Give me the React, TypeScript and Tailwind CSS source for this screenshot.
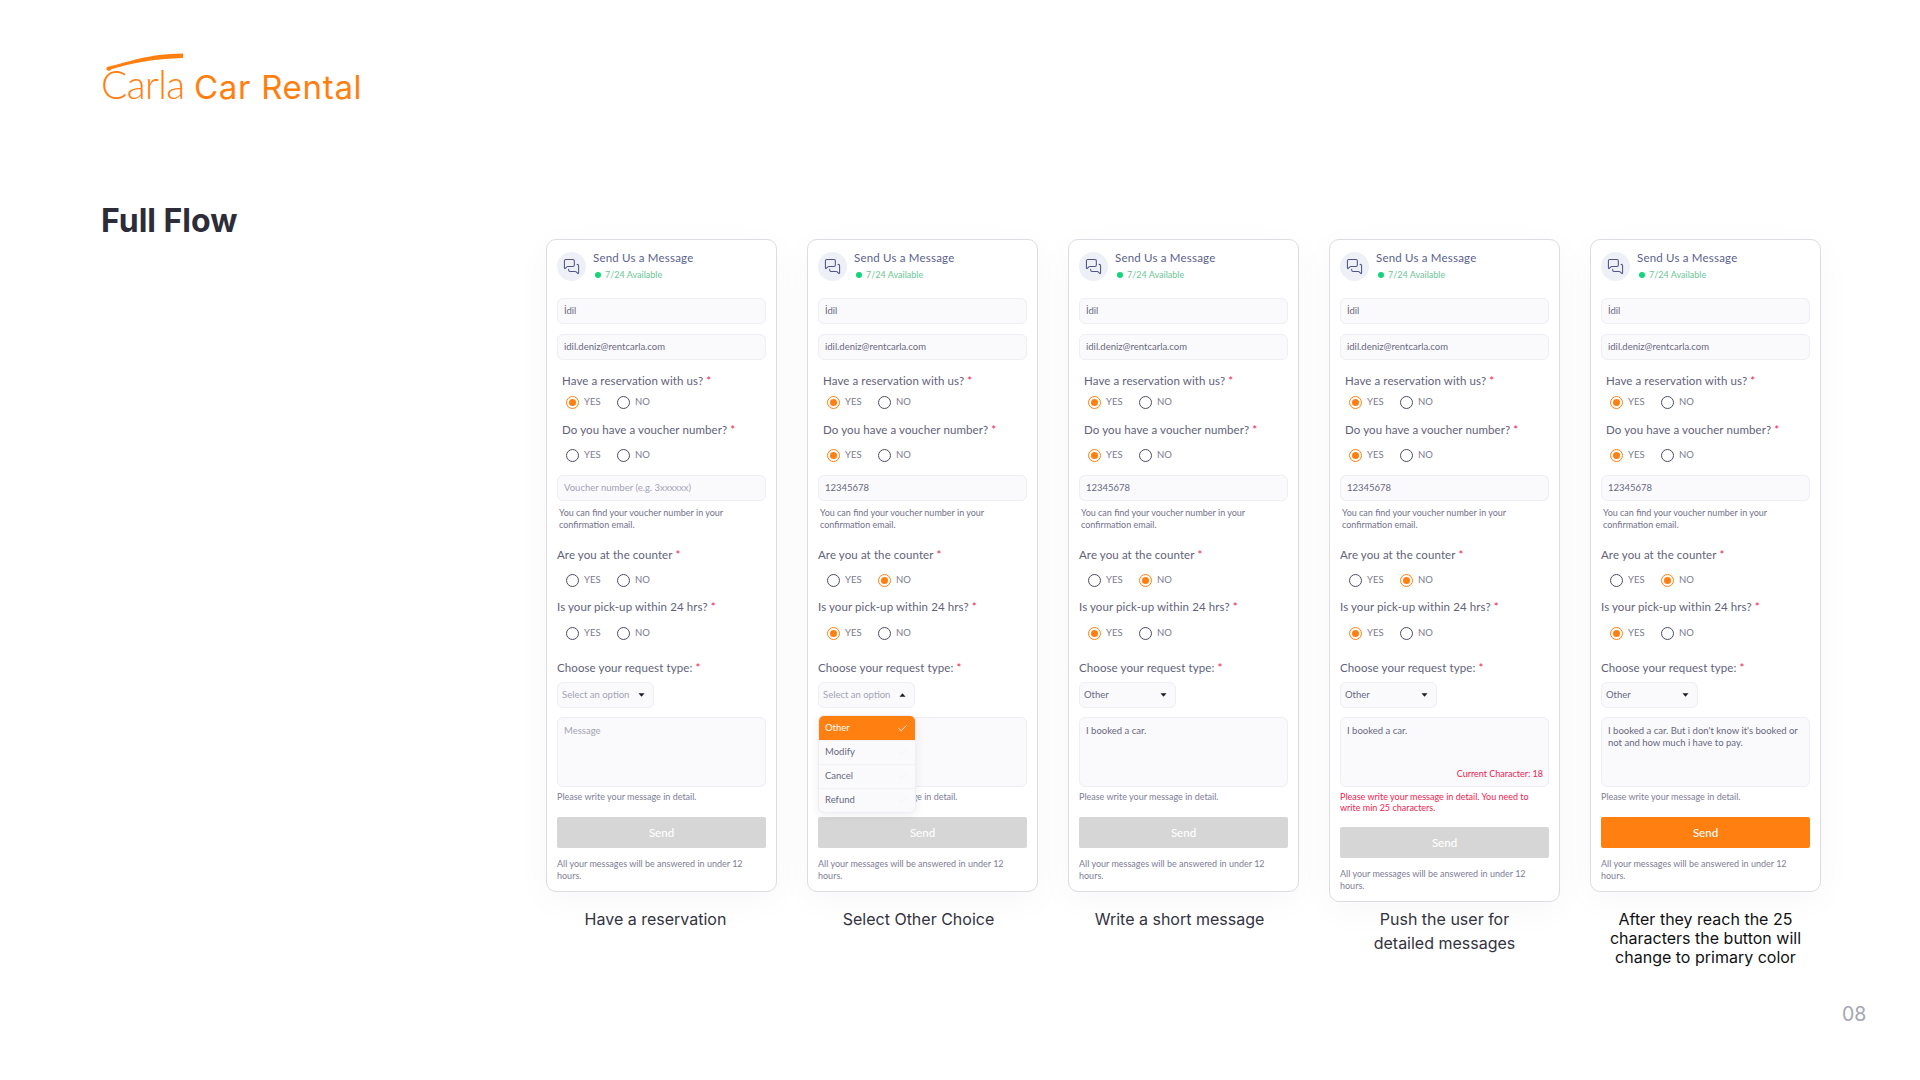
import React from 'react';
import { MessagesSquare, Check } from 'lucide-react';

type Choice = 'yes' | 'no' | null;

interface CardConfig {
  caption: string[];
  captionClass: string;
  voucher: Choice;
  voucherValue: string;
  counter: Choice;
  pickup: Choice;
  selectValue: string;
  menuOpen?: boolean;
  message: string;
  charCount?: string;
  error?: boolean;
  ready?: boolean;
}

const BODY = "[font-family:Lato,'Noto_Sans',sans-serif]";

const cards: CardConfig[] = [
  {
    caption: ['Have a reservation'],
    captionClass: 'mt-[15px] -translate-x-[6px] leading-[24px] text-[#33333f]',
    voucher: null,
    voucherValue: '',
    counter: null,
    pickup: null,
    selectValue: '',
    message: '',
  },
  {
    caption: ['Select Other Choice'],
    captionClass: 'mt-[15px] -translate-x-[4px] leading-[24px] text-[#33333f]',
    voucher: 'yes',
    voucherValue: '12345678',
    counter: 'no',
    pickup: 'yes',
    selectValue: '',
    menuOpen: true,
    message: '',
  },
  {
    caption: ['Write a short message'],
    captionClass: 'mt-[15px] -translate-x-[4px] leading-[24px] text-[#33333f]',
    voucher: 'yes',
    voucherValue: '12345678',
    counter: 'no',
    pickup: 'yes',
    selectValue: 'Other',
    message: 'I booked a car.',
  },
  {
    caption: ['Push the user for', 'detailed messages'],
    captionClass: 'mt-[5px] leading-[24px] text-[#33333f]',
    voucher: 'yes',
    voucherValue: '12345678',
    counter: 'no',
    pickup: 'yes',
    selectValue: 'Other',
    message: 'I booked a car.',
    charCount: 'Current Character: 18',
    error: true,
  },
  {
    caption: ['After they reach the 25', 'characters the button will', 'change to primary color'],
    captionClass: 'mt-[18px] leading-[19px] text-[#111111]',
    voucher: 'yes',
    voucherValue: '12345678',
    counter: 'no',
    pickup: 'yes',
    selectValue: 'Other',
    message: "I booked a car. But i don't know it's booked or not and how much i have to pay.",
    ready: true,
  },
];

const Radio = ({ checked, label }: { checked: boolean; label: string }) => (
  <div className="flex items-center">
    <span
      className={`flex h-[13px] w-[13px] items-center justify-center rounded-full border-[1.5px] ${
        checked ? 'border-[#ff7f11]' : 'border-[#4c4c64]'
      }`}
    >
      {checked && <span className="h-[7px] w-[7px] rounded-full bg-[#ff7f11]" />}
    </span>
    <span className="ml-[5px] text-[9.5px] text-[#7a7a8e]">{label}</span>
  </div>
);

const RadioRow = ({ value, className }: { value: Choice; className: string }) => (
  <div className={`flex h-[14px] pl-[9px] ${className}`}>
    <div className="w-[51px]">
      <Radio checked={value === 'yes'} label="YES" />
    </div>
    <Radio checked={value === 'no'} label="NO" />
  </div>
);

const Label = ({ text, className }: { text: string; className: string }) => (
  <div className={`h-[16px] text-[11.5px] leading-[16px] tracking-[0.1px] text-[#62627a] ${className}`}>
    {text} <span className="text-[#f0234f]">*</span>
  </div>
);

const TextInput = ({ value, placeholder, className = '' }: { value: string; placeholder?: string; className?: string }) => (
  <div
    className={`flex h-[26px] items-center rounded-[6px] border border-[#eeeef4] bg-[#fafafd] px-[6px] text-[9.5px] ${
      value ? 'text-[#686880]' : 'text-[#a3a3b4]'
    } ${className}`}
  >
    {value || placeholder}
  </div>
);

const Caret = ({ up }: { up?: boolean }) => (
  <svg width="7" height="4" viewBox="0 0 7 4" className={up ? 'rotate-180' : ''}>
    <path d="M0.5 0.3h6L3.5 3.8z" fill="#1c1c28" />
  </svg>
);

const DropdownMenu = () => (
  <div className="absolute left-0 top-[33px] z-10 w-[98px] overflow-hidden rounded-[6px] border border-[#eeeef4] bg-[#fafafd] text-[9.5px] text-[#686880] shadow-[0_2px_8px_rgba(40,40,70,0.08)]">
    {['Other', 'Modify', 'Cancel', 'Refund'].map((option, i) => (
      <div
        key={option}
        className={`flex h-[24px] items-center justify-between pl-[6px] pr-[7px] ${
          i === 0 ? 'bg-[#ff7f11] text-white' : 'border-t border-[#f1f1f6]'
        }`}
      >
        <span>{option}</span>
        <Check size={11} strokeWidth={2} className={i === 0 ? 'text-white' : 'text-[#f3f3f8]'} />
      </div>
    ))}
  </div>
);

const FormCard = ({ card }: { card: CardConfig }) => (
  <div className="w-[231px]">
    <div
      className={`${BODY} rounded-[10px] border border-[#dcdce2] bg-white px-[10px] pb-[10px] pt-[12px] shadow-[0_8px_36px_rgba(30,30,60,0.035)]`}
    >
      <div className="flex h-[29px]">
        <div className="flex h-[29px] w-[29px] items-center justify-center rounded-full bg-[#eef0f8]">
          <MessagesSquare size={17} strokeWidth={1.5} className="text-[#4f5585]" />
        </div>
        <div className="ml-[7px] -translate-y-[1px]">
          <div className="text-[11.5px] leading-[14px] tracking-[0.2px] text-[#5a5f8c]">Send Us a Message</div>
          <div className="mt-[4px] flex items-center pl-[2px] text-[9px] leading-[12px] text-[#6cc496]">
            <span className="mr-[4px] h-[6px] w-[6px] rounded-full bg-[#12d678]" />
            7/24 Available
          </div>
        </div>
      </div>

      <TextInput value="İdil" className="mt-[17px]" />
      <TextInput value="idil.deniz@rentcarla.com" className="mt-[10px]" />

      <Label text="Have a reservation with us?" className="ml-[5px] mt-[13px]" />
      <RadioRow value="yes" className="mt-[6px]" />
      <Label text="Do you have a voucher number?" className="ml-[5px] mt-[13px]" />
      <RadioRow value={card.voucher} className="mt-[10px]" />

      <TextInput value={card.voucherValue} placeholder="Voucher number (e.g. 3xxxxxx)" className="mt-[13px]" />
      <p className="ml-[2px] mt-[6px] w-[190px] text-[9px] leading-[12px] text-[#72728a]">
        You can find your voucher number in your confirmation email.
      </p>

      <Label text="Are you at the counter" className="mt-[16px]" />
      <RadioRow value={card.counter} className="mt-[10px]" />
      <Label text="Is your pick-up within 24 hrs?" className="mt-[12px]" />
      <RadioRow value={card.pickup} className="mt-[11px]" />

      <Label text="Choose your request type:" className="mt-[20px]" />
      <div className="relative mt-[6px] w-[97px]">
        <div
          className={`flex h-[26px] items-center justify-between rounded-[6px] border border-[#eeeef4] bg-[#fafafd] pl-[4px] pr-[8px] text-[9.5px] ${
            card.selectValue ? 'text-[#686880]' : 'text-[#a3a3b4]'
          }`}
        >
          {card.selectValue || 'Select an option'}
          <Caret up={card.menuOpen} />
        </div>
        {card.menuOpen && <DropdownMenu />}
      </div>

      <div
        className={`relative mt-[9px] h-[70px] rounded-[6px] border border-[#eeeef4] bg-[#fafafd] px-[6px] pt-[7px] text-[9.5px] leading-[12px] ${
          card.message ? 'text-[#686880]' : 'text-[#a3a3b4]'
        }`}
      >
        {card.message || (card.menuOpen ? '' : 'Message')}
        {card.charCount && (
          <span className="absolute bottom-[6px] right-[5px] text-[9px] text-[#f0234f]">{card.charCount}</span>
        )}
      </div>

      {card.error ? (
        <p className="mt-[4px] text-[9px] leading-[11px] text-[#f0234f]">
          Please write your message in detail. You need to write min 25 characters.
        </p>
      ) : (
        <p className="mt-[4px] text-[9px] leading-[12px] text-[#7e7e96]">Please write your message in detail.</p>
      )}

      <div
        className={`mt-[14px] flex h-[31px] items-center justify-center rounded-[2px] text-[11.5px] font-medium text-white ${
          card.ready ? 'bg-[#ff7f11]' : 'bg-[#d6d6d6]'
        }`}
      >
        Send
      </div>

      <p className="mt-[10px] text-[9px] leading-[11.5px] text-[#7e7e96]">
        All your messages will be answered in under 12 hours.
      </p>
    </div>
    <div className={`text-center font-['Inter',sans-serif] text-[16px] ${card.captionClass}`}>
      {card.caption.map((line) => (
        <div key={line}>{line}</div>
      ))}
    </div>
  </div>
);

const Logo = () => (
  <div className="flex h-[50px] items-end text-[#ff7f11]">
    <div className="relative w-[93px]">
      <svg width="86" height="30" viewBox="0 0 86 30" className="absolute -top-[10px] left-0">
        <path d="M6 14 C28 9 46 1 82 0.5 L82 5 C52 5.5 30 10.5 11 16 L8 18 C5 17 5 15 6 14z" fill="#ff7f11" />
      </svg>
      <span className="block -translate-y-[2px] font-['Lato',sans-serif] text-[39px] font-light leading-[46px] tracking-[-0.6px]">
        Carla
      </span>
    </div>
    <span className="translate-y-[1px] font-['Inter',sans-serif] text-[33px] leading-[46px] tracking-[0.7px]">Car Rental</span>
  </div>
);

export default function App() {
  return (
    <div className="h-[1080px] w-[1920px] overflow-hidden bg-white">
      <div className="pl-[101px] pt-[59px]">
        <Logo />
      </div>
      <h1 className="ml-[101px] mt-[92px] h-[38px] font-['Inter',sans-serif] text-[32px] font-bold leading-[40px] text-[#2d2d3a]">
        Full Flow
      </h1>
      <div className="ml-[546px] flex items-start gap-[30px]">
        {cards.map((card, i) => (
          <FormCard key={i} card={card} />
        ))}
      </div>
      <div className="absolute left-[1842px] top-[1000px] font-['Inter',sans-serif] text-[19.5px] leading-[28px] text-[#a4a6b3]">
        08
      </div>
    </div>
  );
}
